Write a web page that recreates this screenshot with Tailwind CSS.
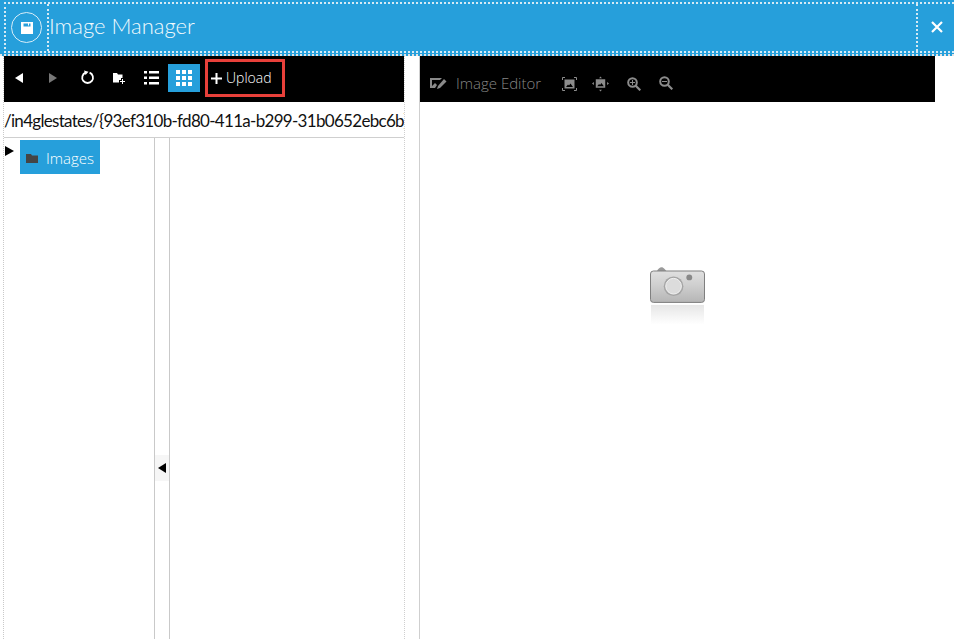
<!DOCTYPE html>
<html><head><meta charset="utf-8"><script src="https://cdn.jsdelivr.net/npm/@tailwindcss/browser@4"></script></head>
<body class="bg-white overflow-hidden">
<div class="w-[954px] h-[639px] flex flex-col overflow-hidden font-['Open_Sans',sans-serif]">
  <header class="h-[56px] shrink-0 bg-[#269fdb] pt-[2px] pl-[4px] flex flex-col border-b-2 border-dotted border-[#e3e3e3]">
    <div class="h-[51px] flex border-t-2 border-b-2 border-l-2 border-dotted border-[#d5eaf5]">
      <div class="w-[43px] shrink-0 flex items-center justify-center border-r-2 border-dotted border-[#d5eaf5]">
        <div class="w-[31px] h-[31px] rounded-full border border-[#d8edf8] flex items-center justify-center">
          <svg width="14" height="14" viewBox="0 0 14 14"><path fill="#fff" fill-rule="evenodd" d="M1 1h12v12H1zM3.500 2.500v3h7v-3H9v2H8v-2z"/></svg>
        </div>
      </div>
      <div class="w-[869px] shrink-0 flex items-center border-r-2 border-dotted border-[#d5eaf5]">
        <span class="text-[22px] leading-none font-['Lato',sans-serif] font-light text-[#f2fafd] whitespace-nowrap pb-[4px]">Image Manager</span>
      </div>
      <div class="flex-1 flex items-center justify-center">
        <svg width="12" height="12" viewBox="0 0 12 12" class="ml-[1px] mb-[2px]"><path stroke="#fff" stroke-width="2.200" d="M1 1l10 10M11 1L1 11"/></svg>
      </div>
    </div>
  </header>
  <main class="flex-1 flex pl-[3px] min-h-0">
    <section class="w-[402px] shrink-0 flex flex-col border-l border-dotted border-[#c9c9c9] border-r border-r-[#cfcfcf]">
      <div class="h-[46px] bg-black flex items-center pl-[11px] shrink-0 pb-[3px]">
        <svg width="9" height="10" viewBox="0 0 9 10" class="mr-[24px]"><path fill="#fff" d="M8 0v10L0 5z"/></svg>
        <svg width="9" height="10" viewBox="0 0 9 10" class="mr-[23px]"><path fill="#777" d="M1 0v10l8-5z"/></svg>
        <svg width="15" height="15" viewBox="0 0 15 15" class="mr-[17px]"><path fill="none" stroke="#fff" stroke-width="1.800" d="M9.600 2.600a5.400 5.400 0 1 1-4 0"/><path fill="#fff" d="M4 .5l4.500 1.200L5.500 5z"/></svg>
        <svg width="14" height="14" viewBox="0 0 14 14" class="mr-[18px]"><path fill="#fff" d="M1 2h4l1 1.500h4.500V7H9v2H7v2.500H1z"/><path stroke="#fff" d="M10.500 8v5M8 10.500h5"/></svg>
        <svg width="15" height="14" viewBox="0 0 15 14" class="mr-[9px]"><path fill="#fff" d="M0 0h3v2.500H0zM5 0h10v2.500H5zM0 5.500h3v2.500H0zM5 5.500h10v2.500H5zM0 11h3v2.500H0zM5 11h10v2.500H5z"/></svg>
        <div class="w-[32px] h-[28px] bg-[#269fdb] flex items-center justify-center mr-[5px]">
          <svg width="16" height="16" viewBox="0 0 16 16"><path fill="#fff" d="M0 0h4v4H0zM6 0h4v4H6zM12 0h4v4h-4zM0 6h4v4H0zM6 6h4v4H6zM12 6h4v4h-4zM0 12h4v4H0zM6 12h4v4H6zM12 12h4v4h-4z"/></svg>
        </div>
        <div class="w-[80px] h-[38px] border-[3px] border-[#e8403a] flex items-center pl-[3px] gap-[4px] mt-[1px]">
          <svg width="11" height="11" viewBox="0 0 11 11"><path stroke="#fff" stroke-width="2" d="M5.500 0v11M0 5.500h11"/></svg>
          <span class="text-[14px] font-light text-white leading-none">Upload</span>
        </div>
      </div>
      <div class="h-[36px] shrink-0 border-b border-[#cfcfcf] flex items-center overflow-hidden">
        <span class="text-[17px] tracking-[-0.7px] font-['Lato',sans-serif] text-[#111] whitespace-nowrap leading-none pt-[1px]">/in4glestates/{93ef310b-fd80-411a-b299-31b0652ebc6b}</span>
      </div>
      <div class="flex-1 flex min-h-0">
        <div class="w-[150px] shrink-0 flex items-start pt-[2px] pl-[1px]">
          <svg width="9" height="10" viewBox="0 0 9 10" class="mt-[6px] mr-[6px]"><path fill="#000" d="M0 0v10l9-5z"/></svg>
          <div class="w-[80px] h-[34px] bg-[#269fdb] flex items-center pl-[6px] gap-[8px]">
            <svg width="12" height="9" viewBox="0 0 12 9" class="mt-[3px]"><path fill="#444" d="M0 0h5l1 1.500h6V9H0z"/></svg>
            <span class="text-[15px] font-light text-white leading-none pt-[2px]">Images</span>
          </div>
        </div>
        <div class="w-[16px] shrink-0 border-l border-r border-[#c9c9c9] flex items-center">
          <div class="w-[14px] h-[26px] bg-[#f6f6f6] flex items-center justify-center mt-[159px]">
            <svg width="8" height="10" viewBox="0 0 8 10"><path fill="#000" d="M8 0v10L0 5z"/></svg>
          </div>
        </div>
        <div class="flex-1"></div>
      </div>
    </section>
    <div class="w-[15px] shrink-0 border-r border-[#cfcfcf]"></div>
    <section class="flex-1 flex flex-col min-w-0">
      <div class="w-[515px] h-[46px] bg-black flex items-center pl-[10px] shrink-0 pt-[9px]">
        <svg width="17" height="14" viewBox="0 0 17 14" class="mr-[9px]"><path fill="#8a8a8a" d="M0 1h12L10 3H2v6l3-3 2 2-2 3H0z"/><path fill="#8a8a8a" d="M14 2l2.500 2.500L10 11l-3 1 1-3z"/></svg>
        <span class="text-[15px] font-light text-[#858585] leading-none mr-[21px]">Image Editor</span>
        <svg width="15" height="14" viewBox="0 0 15 14" class="mr-[15px]"><g fill="none" stroke="#8c8c8c"><path d="M.5 3V.5H3M12 .5h2.500V3M14.500 11v2.500H12M3 13.500H.5V11"/></g><path fill="#8c8c8c" fill-rule="evenodd" d="M2.500 2.500h10v9h-10zM4 10h7L8.500 6.500 7 8.500 6 7.500z"/></svg>
        <svg width="17" height="16" viewBox="0 0 18 16" class="mr-[18px]"><path fill="#8c8c8c" fill-rule="evenodd" d="M4 3h10v9H4zM5.500 10.500h7L10 7l-1.500 2-1-1z"/><path fill="#8c8c8c" d="M0 7.500l2-1.500v3zM18 7.500l-2-1.500v3zM9 0l1.500 2h-3zM9 16l1.500-2h-3z"/></svg>
        <svg width="14" height="14" viewBox="0 0 14 14" class="mr-[18px]"><circle cx="5.500" cy="5.500" r="4.300" fill="none" stroke="#8c8c8c" stroke-width="2"/><path stroke="#8c8c8c" stroke-width="2.200" d="M8.500 8.500l4.800 4.800"/><path stroke="#8c8c8c" d="M3 5.500h5M5.500 3v5"/></svg>
        <svg width="14" height="14" viewBox="0 0 14 14" class="-mt-[2px]"><circle cx="5.500" cy="5.500" r="4.300" fill="none" stroke="#8c8c8c" stroke-width="2"/><path stroke="#8c8c8c" stroke-width="2.200" d="M8.500 8.500l4.800 4.800"/><path stroke="#8c8c8c" d="M3 5.500h5"/></svg>
      </div>
      <div class="w-[515px] flex-1 flex justify-center pt-[164px] pr-[1px]">
        <svg width="55" height="64" viewBox="0 0 56 64" class="blur-[0.4px]">
          <defs>
            <linearGradient id="b" x1="0" y1="0" x2="0" y2="1"><stop offset="0" stop-color="#e0e0e0"/><stop offset="0.45" stop-color="#cfcfcf"/><stop offset="1" stop-color="#b5b5b5"/></linearGradient>
            <linearGradient id="r" x1="0" y1="0" x2="0" y2="1"><stop offset="0" stop-color="#e6e6e6"/><stop offset="1" stop-color="#ffffff"/></linearGradient>
          </defs>
          <path fill="#9a9a9a" d="M7 5c1-3 4-5 6-4 2 1 3 3 4 4z"/>
          <rect x="0.500" y="4.500" width="55" height="32" rx="3" fill="url(#b)" stroke="#7d7d7d"/>
          <circle cx="24" cy="20" r="10" fill="#a5a5a5"/>
          <circle cx="24" cy="20" r="8" fill="#dcdcdc" stroke="#f2f2f2"/>
          <circle cx="40" cy="11" r="3" fill="#888"/>
          <rect x="1" y="39" width="54" height="20" fill="url(#r)"/>
        </svg>
      </div>
    </section>
  </main>
</div>
</body></html>
